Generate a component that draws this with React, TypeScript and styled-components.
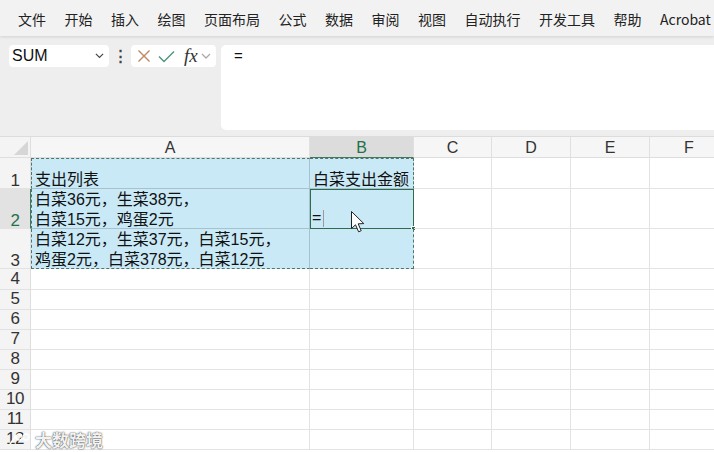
import React from "react";
import styled, { createGlobalStyle, css } from "styled-components";

const GlobalStyle = createGlobalStyle`
  html, body {
    margin: 0;
    padding: 0;
    width: 714px;
    height: 452px;
    overflow: hidden;
    background: #ffffff;
    font-family: "Liberation Sans", "Noto Sans CJK SC", sans-serif;
  }
  * { box-sizing: border-box; }
`;

const Page = styled.div`
  position: relative;
  width: 714px;
  height: 452px;
  overflow: hidden;
`;

const MenuBar = styled.div`
  height: 36px;
  display: flex;
  align-items: center;
  gap: 18.5px;
  padding-left: 18px;
  background: #f2f2f2;
  box-shadow: 0 1px 3px rgba(0, 0, 0, 0.12);
  position: relative;
  z-index: 2;
  white-space: nowrap;
`;

const MenuItem = styled.span`
  font-family: "Noto Sans CJK SC", "Liberation Sans", sans-serif;
  font-size: 14px;
  color: #222;
  line-height: 20px;
  padding-top: 2px;
`;

const FormulaArea = styled.div`
  height: 101px;
  background: #eeeeee;
  display: flex;
  align-items: flex-start;
  padding: 9px 0 0 9px;
  border-bottom: 1px solid #dcdcdc;
`;

const NameBox = styled.div`
  width: 100px;
  height: 22px;
  background: #fff;
  border-radius: 4px;
  display: flex;
  align-items: center;
  justify-content: space-between;
  padding: 0 5px 0 3px;
  font-size: 16px;
  color: #111;
`;

const Dots = styled.div`
  width: 22px;
  height: 22px;
  display: flex;
  align-items: center;
  justify-content: center;
  color: #444;
  font-size: 15px;
  font-weight: bold;
`;

const ButtonGroup = styled.div`
  width: 85px;
  height: 22px;
  background: #fff;
  border-radius: 4px;
  display: flex;
  align-items: center;
  padding-left: 6px;
  gap: 7px;
`;

const Fx = styled.span`
  font-family: "Liberation Serif", serif;
  font-style: italic;
  font-size: 19px;
  color: #333;
  line-height: 22px;
  margin-left: 2px;
  margin-right: -4px;
`;

const FormulaInput = styled.div`
  margin-left: 5px;
  flex: 1;
  height: 85px;
  background: #fff;
  border-radius: 5px 0 0 5px;
  padding: 1px 0 0 13px;
  font-size: 15px;
  color: #111;
  line-height: 20px;
`;

const Sheet = styled.div`
  display: grid;
  grid-template-columns: 31px 279px 104px 78px 79px 79px 79px;
  grid-template-rows: 21px 31px 40px 40px 21px repeat(8, 20px);
  background: #fff;
`;

const Corner = styled.div`
  background: #f4f4f4;
  border-right: 1px solid #dedede;
  border-bottom: 1px solid #dedede;
  position: relative;
  &::after {
    content: "";
    position: absolute;
    right: 2px;
    bottom: 2px;
    width: 0;
    height: 0;
    border-left: 14px solid transparent;
    border-bottom: 14px solid #d6d6d6;
  }
`;

const ColHeader = styled.div<{ $active?: boolean }>`
  background: ${p => (p.$active ? "#dcdcdc" : "#f6f6f6")};
  color: ${p => (p.$active ? "#23714a" : "#333")};
  border-right: 1px solid #e0e0e0;
  border-bottom: 1px solid ${p => (p.$active ? "#3f7a5c" : "#dedede")};
  font-size: 16px;
  display: flex;
  align-items: center;
  justify-content: center;
  padding-top: 1px;
`;

const RowHeader = styled.div<{ $active?: boolean; $shift?: number }>`
  background: ${p => (p.$active ? "#e2e2e2" : "#f4f4f4")};
  color: ${p => (p.$active ? "#23714a" : "#333")};
  border-right: 1px solid ${p => (p.$active ? "#3f7a5c" : "#dedede")};
  border-bottom: 1px solid #e2e2e2;
  font-size: 17px;
  display: flex;
  align-items: flex-end;
  justify-content: center;
  line-height: 19px;
  letter-spacing: -0.5px;
  padding-bottom: ${p => (p.$shift ? 0 : 1)}px;
  & > span {
    transform: translateY(${p => p.$shift ?? 0}px);
  }
`;

type Edges = { t?: boolean; b?: boolean; l?: boolean; r?: boolean };

const dashed = "1px dashed #52746a";

const Cell = styled.div<{ $sel?: boolean; $edges?: Edges; $active?: boolean }>`
  position: relative;
  border-right: 1px solid #e3e3e3;
  border-bottom: 1px solid #e3e3e3;
  font-family: "Liberation Sans", "Noto Sans CJK SC", sans-serif;
  font-size: 16px;
  color: #111;
  line-height: 20px;
  padding: 0 0 0 3px;
  display: flex;
  align-items: flex-end;
  white-space: pre;
  overflow: visible;
  ${p =>
    p.$sel &&
    css`
      background: #c9e9f7;
      border-right: 1px solid #a7c2cc;
      border-bottom: 1px solid #a7c2cc;
    `}
  ${p => p.$edges?.t && css`border-top: ${dashed};`}
  ${p => p.$edges?.b && css`border-bottom: ${dashed};`}
  ${p => p.$edges?.l && css`border-left: ${dashed};`}
  ${p => p.$edges?.r && css`border-right: ${dashed};`}
  ${p =>
    p.$active &&
    css`
      border: 1px solid #2f6b4d;
      padding-left: 1px;
    `}
`;

const CellText = styled.span`
  display: flex;
  align-items: flex-end;
  transform: translateY(2px);
`;

const FillHandle = styled.span`
  position: absolute;
  right: -3px;
  bottom: -3px;
  width: 5px;
  height: 5px;
  background: #2f6b4d;
  border: 1px solid #fff;
`;

const Caret = styled.span`
  display: inline-block;
  width: 1px;
  height: 17px;
  background: #9a9a9a;
  margin-left: 2px;
  margin-bottom: 1px;
`;

const Pointer = styled.svg`
  position: absolute;
  left: 350px;
  top: 210px;
`;

const Watermark = styled.div`
  position: absolute;
  left: 8px;
  top: 427px;
  display: flex;
  align-items: center;
  gap: 5px;
  font-family: "Noto Sans CJK SC", sans-serif;
  font-size: 17px;
  font-weight: 700;
  color: rgba(255, 255, 255, 0.95);
  text-shadow: 0 0 2px rgba(0, 0, 0, 0.6), 0 0 1px rgba(0, 0, 0, 0.6);
`;

const menu = [
  "文件", "开始", "插入", "绘图", "页面布局", "公式", "数据",
  "审阅", "视图", "自动执行", "开发工具", "帮助", "Acrobat",
];

const cols = ["A", "B", "C", "D", "E", "F"];

const Chevron = ({ color = "#444", size = 9 }: { color?: string; size?: number }) => (
  <svg width={size} height={size * 0.6} viewBox="0 0 10 6">
    <path d="M1 1 L5 5 L9 1" fill="none" stroke={color} strokeWidth="1.3" />
  </svg>
);

export default function App() {
  const a1 = "支出列表";
  const a2 = "白菜36元，生菜38元，\n白菜15元，鸡蛋2元";
  const a3 = "白菜12元，生菜37元，白菜15元，\n鸡蛋2元，白菜378元，白菜12元";

  const renderEmpty = (row: number) =>
    [2, 3, 4, 5].map(c => <Cell key={`${row}-${c}`} />);

  return (
    <Page>
      <GlobalStyle />
      <MenuBar>
        {menu.map(m => (
          <MenuItem key={m}>{m}</MenuItem>
        ))}
      </MenuBar>

      <FormulaArea>
        <NameBox>
          <span>SUM</span>
          <Chevron />
        </NameBox>
        <Dots>⋮</Dots>
        <ButtonGroup>
          <svg width="14" height="14" viewBox="0 0 14 14">
            <path d="M1.5 1.5 L12.5 12.5 M12.5 1.5 L1.5 12.5" stroke="#bd8660" strokeWidth="1.4" />
          </svg>
          <svg width="17" height="13" viewBox="0 0 17 13">
            <path d="M1 6.5 L6 11.5 L16 1.5" fill="none" stroke="#4f937a" strokeWidth="1.4" />
          </svg>
          <Fx>fx</Fx>
          <Chevron color="#aaa" size={10} />
        </ButtonGroup>
        <FormulaInput>=</FormulaInput>
      </FormulaArea>

      <Sheet>
        <Corner />
        {cols.map(c => (
          <ColHeader key={c} $active={c === "B"}>
            {c}
          </ColHeader>
        ))}

        <RowHeader $shift={2}><span>1</span></RowHeader>
        <Cell $sel $edges={{ t: true, l: true }}><CellText>{a1}</CellText></Cell>
        <Cell $sel $edges={{ t: true, r: true }}><CellText>白菜支出金额</CellText></Cell>
        {renderEmpty(1)}

        <RowHeader $active $shift={2}><span>2</span></RowHeader>
        <Cell $sel $edges={{ l: true }}><CellText>{a2}</CellText></Cell>
        <Cell $sel $active>
          =<Caret />
          <FillHandle />
        </Cell>
        {renderEmpty(2)}

        <RowHeader $shift={2}><span>3</span></RowHeader>
        <Cell $sel $edges={{ l: true, b: true }}><CellText>{a3}</CellText></Cell>
        <Cell $sel $edges={{ r: true, b: true }} />
        {renderEmpty(3)}

        {Array.from({ length: 9 }, (_, i) => i + 4).map(r => (
          <React.Fragment key={r}>
            <RowHeader><span>{r}</span></RowHeader>
            <Cell />
            <Cell />
            {renderEmpty(r)}
          </React.Fragment>
        ))}
      </Sheet>

      <Pointer width="16" height="24" viewBox="0 0 16 24">
        <path
          d="M1.5 1.5 L1.5 18.5 L5.5 14.8 L8.6 21.8 L11.2 20.7 L8.2 13.8 L13.8 13.6 Z"
          fill="#fff"
          stroke="#222"
          strokeWidth="1"
          strokeLinejoin="round"
        />
      </Pointer>

      <Watermark>
        <svg width="22" height="16" viewBox="0 0 22 16">
          <circle cx="11" cy="5" r="3" fill="none" stroke="#fff" strokeWidth="1.3" />
          <circle cx="18" cy="5" r="3" fill="none" stroke="#fff" strokeWidth="1.3" />
          <path d="M2 12 L8 4" stroke="#fff" strokeWidth="1.6" />
        </svg>
        <span>大数跨境</span>
      </Watermark>
    </Page>
  );
}
